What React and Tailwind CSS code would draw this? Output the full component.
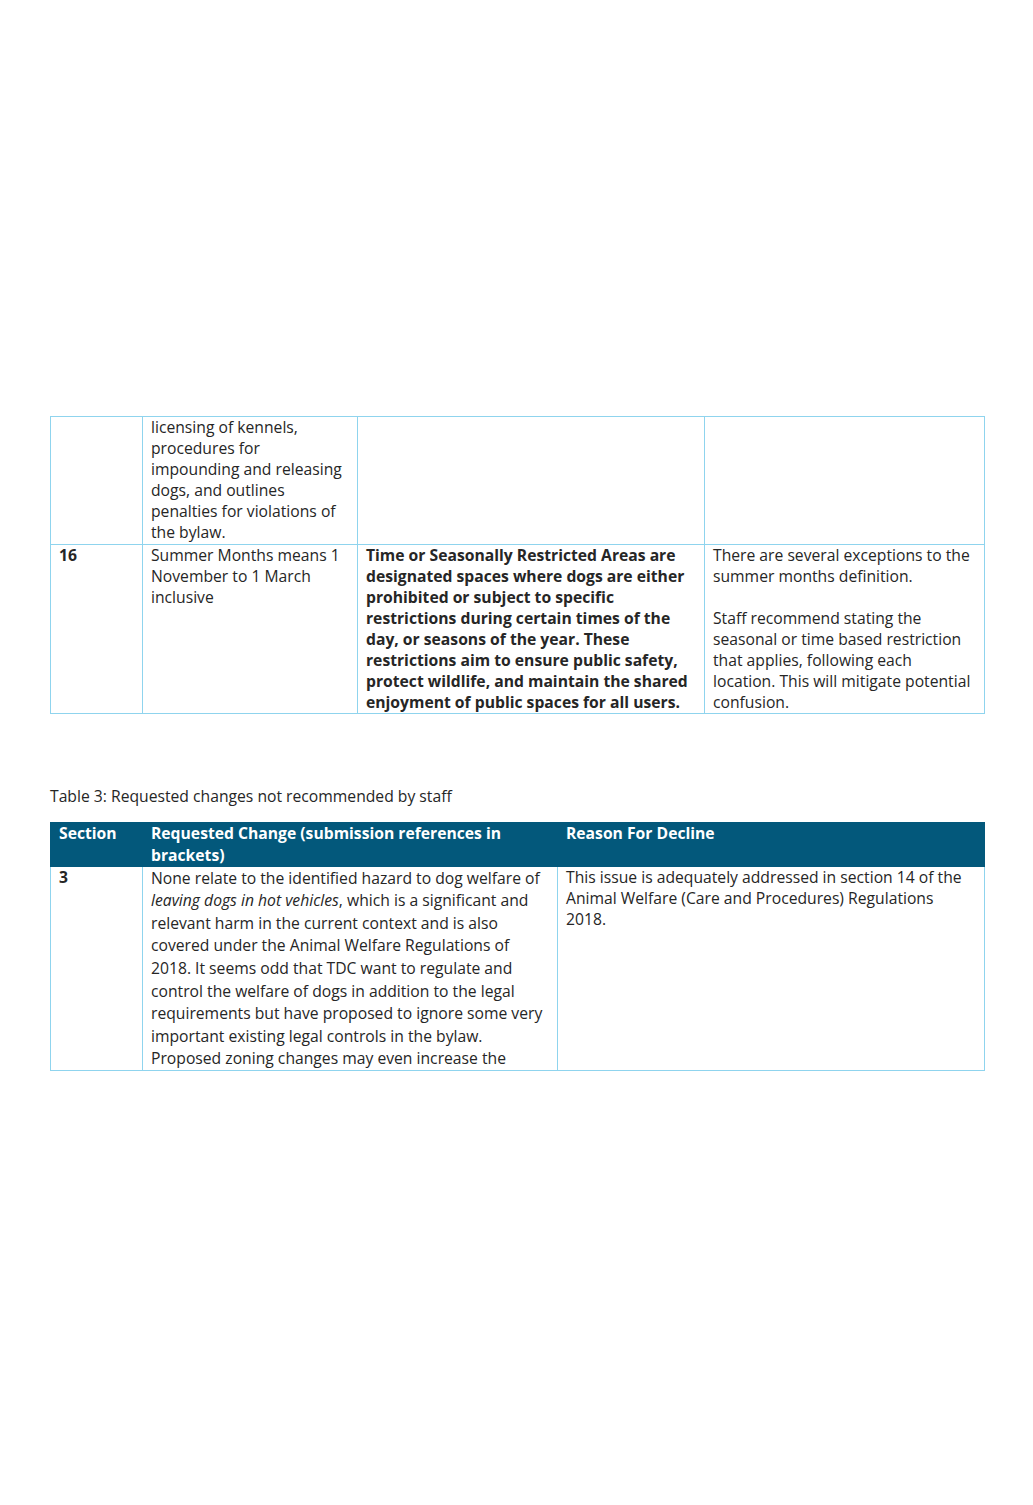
const border = "border border-[#8fd4ee]";
const cell = `${border} align-top px-2 pt-0 pb-0 whitespace-nowrap`;

const Lines = ({ lines }) => (
  <>
    {lines.map((l, i) => (
      <span key={i} className="block">
        {l}
      </span>
    ))}
  </>
);

export default function App() {
  return (
    <div
      className="w-[1033px] h-[1505px] bg-white text-[#262626] text-[15.7px] leading-[21.1px]"
      style={{ fontFamily: "'Open Sans', 'Liberation Sans', sans-serif" }}
    >
      <div className="pt-[416px] pl-[50px] w-[985px]">
        <table className="table-fixed border-collapse w-full">
          <colgroup>
            <col className="w-[92px]" />
            <col className="w-[215px]" />
            <col className="w-[347px]" />
            <col />
          </colgroup>
          <tbody>
            <tr className="h-[127px]">
              <td className={cell}></td>
              <td className={cell}>
                <Lines
                  lines={[
                    "licensing of kennels,",
                    "procedures for",
                    "impounding and releasing",
                    "dogs, and outlines",
                    "penalties for violations of",
                    "the bylaw.",
                  ]}
                />
              </td>
              <td className={cell}></td>
              <td className={cell}></td>
            </tr>
            <tr className="h-[168px]">
              <td className={`${cell} font-bold`}>16</td>
              <td className={cell}>
                <Lines lines={["Summer Months means 1", "November to 1 March", "inclusive"]} />
              </td>
              <td className={`${cell} font-bold`}>
                <Lines
                  lines={[
                    "Time or Seasonally Restricted Areas are",
                    "designated spaces where dogs are either",
                    "prohibited or subject to specific",
                    "restrictions during certain times of the",
                    "day, or seasons of the year. These",
                    "restrictions aim to ensure public safety,",
                    "protect wildlife, and maintain the shared",
                    "enjoyment of public spaces for all users.",
                  ]}
                />
              </td>
              <td className={cell}>
                <Lines lines={["There are several exceptions to the", "summer months definition."]} />
                <div className="mt-[21px]">
                  <Lines
                    lines={[
                      "Staff recommend stating the",
                      "seasonal or time based restriction",
                      "that applies, following each",
                      "location. This will mitigate potential",
                      "confusion.",
                    ]}
                  />
                </div>
              </td>
            </tr>
          </tbody>
        </table>

        <p className="mt-[72px]">Table 3: Requested changes not recommended by staff</p>

        <table className="table-fixed border-collapse w-full mt-[15px]">
          <colgroup>
            <col className="w-[92px]" />
            <col className="w-[415px]" />
            <col />
          </colgroup>
          <thead>
            <tr className="h-[41px] bg-[#03587b] text-white font-bold">
              <th className="border border-[#03587b] align-top text-left px-2 pt-0">Section</th>
              <th className="border border-[#03587b] align-top text-left px-2 pt-0">
                <Lines lines={["Requested Change (submission references in", "brackets)"]} />
              </th>
              <th className="border border-[#03587b] align-top text-left px-2 pt-0">Reason For Decline</th>
            </tr>
          </thead>
          <tbody>
            <tr className="h-[201px]">
              <td className={`${cell} font-bold`}>3</td>
              <td className={`${cell} leading-[22.6px]`}>
                <span className="block">None relate to the identified hazard to dog welfare of</span>
                <span className="block">
                  <em>leaving dogs in hot vehicles</em>, which is a significant and
                </span>
                <Lines
                  lines={[
                    "relevant harm in the current context and is also",
                    "covered under the Animal Welfare Regulations of",
                    "2018. It seems odd that TDC want to regulate and",
                    "control the welfare of dogs in addition to the legal",
                    "requirements but have proposed to ignore some very",
                    "important existing legal controls in the bylaw.",
                    "Proposed zoning changes may even increase the",
                  ]}
                />
              </td>
              <td className={cell}>
                <Lines
                  lines={[
                    "This issue is adequately addressed in section 14 of the",
                    "Animal Welfare (Care and Procedures) Regulations",
                    "2018.",
                  ]}
                />
              </td>
            </tr>
          </tbody>
        </table>
      </div>
    </div>
  );
}
